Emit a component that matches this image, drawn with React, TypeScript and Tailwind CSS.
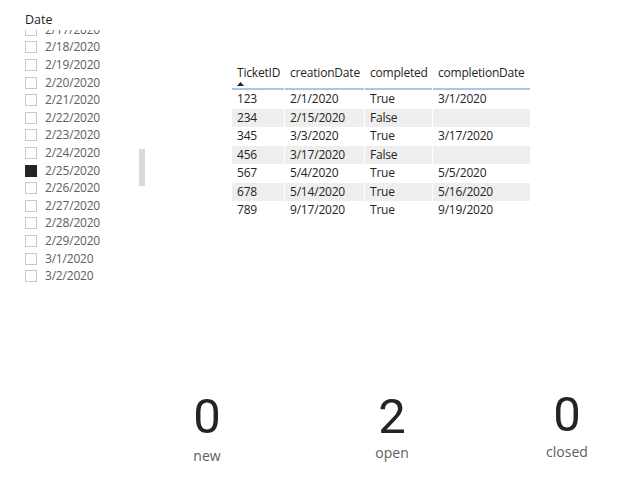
import React from 'react';

const dates = [
  '2/17/2020', '2/18/2020', '2/19/2020', '2/20/2020', '2/21/2020', '2/22/2020',
  '2/23/2020', '2/24/2020', '2/25/2020', '2/26/2020', '2/27/2020', '2/28/2020',
  '2/29/2020', '3/1/2020', '3/2/2020',
];

const rows = [
  ['123', '2/1/2020', 'True', '3/1/2020'],
  ['234', '2/15/2020', 'False', ''],
  ['345', '3/3/2020', 'True', '3/17/2020'],
  ['456', '3/17/2020', 'False', ''],
  ['567', '5/4/2020', 'True', '5/5/2020'],
  ['678', '5/14/2020', 'True', '5/16/2020'],
  ['789', '9/17/2020', 'True', '9/19/2020'],
];

const headers = ['TicketID', 'creationDate', 'completed', 'completionDate'];

function Slicer() {
  return (
    <div className="relative w-[121px] ml-[25px] pt-[12px]">
      <div className="h-[16px] text-[12.5px] leading-[15px] text-[#252423]">Date</div>
      <div className="mt-[2px] h-[254px] overflow-hidden">
        <div className="-mt-[9px]">
          {dates.map((d) => {
            const checked = d === '2/25/2020';
            return (
              <div key={d} className="flex items-center h-[17.6px] gap-[8px]">
                <span
                  className={
                    checked
                      ? 'w-[12px] h-[12px] bg-[#252423] border border-[#252423]'
                      : 'w-[12px] h-[12px] border border-[#c8c8c8] bg-white'
                  }
                />
                <span className="text-[12px] leading-[16px] tracking-[-0.2px] text-[#605e5c]">{d}</span>
              </div>
            );
          })}
        </div>
      </div>
      <div className="absolute left-[114px] top-[149px] w-[6px] h-[37px] bg-[#d9d9d9]" />
    </div>
  );
}

function Table() {
  return (
    <div className="ml-[86px] pt-[62px] text-[12px] tracking-[-0.2px] text-[#252423]">
      <div className="grid grid-cols-[52px_79px_67px_97px] gap-x-px">
        {headers.map((h, i) => (
          <div key={h} className="flex flex-col">
            <div className="h-[26px] pl-[5px] pt-[3px]">
              <div className="leading-[16px] whitespace-nowrap">{h}</div>
              {i === 0 && (
                <svg width="7" height="4" viewBox="0 0 7 4" className="mt-[1px]">
                  <polygon points="0,4 3.5,0 7,4" fill="#252423" />
                </svg>
              )}
            </div>
            <div className="h-[2px] bg-[#a6c8ef]" />
          </div>
        ))}
        {rows.map((r, ri) =>
          r.map((c, ci) => (
            <div
              key={`${ri}-${ci}`}
              className={`h-[18.5px] pl-[5px] leading-[18px] whitespace-nowrap ${ri % 2 === 1 ? 'bg-[#eeeeee]' : 'bg-white'}`}
            >
              {c}
            </div>
          ))
        )}
      </div>
    </div>
  );
}

function Card({ value, label, top, gap }: { value: string; label: string; top: string; gap: string }) {
  return (
    <div className={`w-[120px] flex flex-col items-center ${top}`}>
      <div className="font-['Roboto',sans-serif] text-[49px] leading-none text-[#252423]">{value}</div>
      <div className={`text-[14px] leading-[20px] text-[#605e5c] ${gap}`}>{label}</div>
    </div>
  );
}

export default function App() {
  return (
    <div className="w-[641px] h-[490px] bg-white overflow-hidden flex flex-col font-['Open_Sans','Noto_Sans',sans-serif]">
      <div className="h-[390px] flex items-start">
        <Slicer />
        <Table />
      </div>
      <div className="flex items-start pl-[147px]">
        <Card value="0" label="new" top="mt-[2px]" gap="mt-[5px]" />
        <div className="ml-[65px]">
          <Card value="2" label="open" top="mt-[2px]" gap="mt-[2px]" />
        </div>
        <div className="ml-[55px]">
          <Card value="0" label="closed" top="mt-0" gap="mt-[3px]" />
        </div>
      </div>
    </div>
  );
}
